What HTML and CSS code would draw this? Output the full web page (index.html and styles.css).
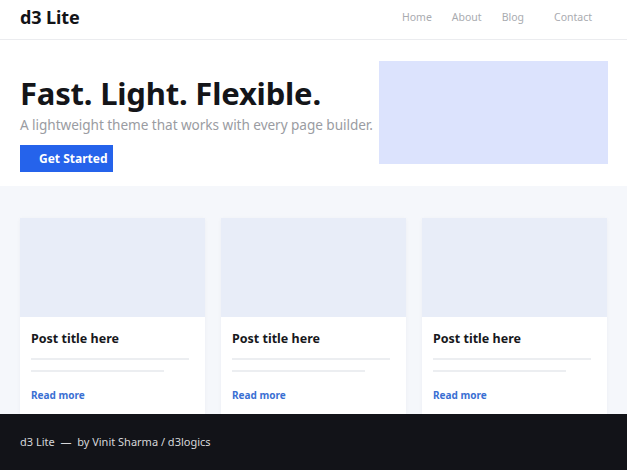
FILE: index.html
```html
<!DOCTYPE html>
<html lang="en">
<head>
<meta charset="utf-8">
<title>d3 Lite</title>
<link rel="stylesheet" href="styles.css">
</head>
<body>
<header class="site-header">
  <a class="logo" href="#">d3 Lite</a>
  <nav class="nav">
    <a href="#">Home</a>
    <a href="#">About</a>
    <a href="#">Blog</a>
    <a class="nav-contact" href="#">Contact</a>
  </nav>
</header>

<section class="hero">
  <div class="hero-text">
    <h1>Fast. Light. Flexible.</h1>
    <p class="lead">A lightweight theme that works with every page builder.</p>
    <a class="btn" href="#">Get Started</a>
  </div>
  <div class="hero-media"></div>
</section>

<section class="posts">
  <article class="card">
    <div class="card-thumb"></div>
    <div class="card-body">
      <h2>Post title here</h2>
      <div class="line"></div>
      <div class="line short"></div>
      <a class="more" href="#">Read more</a>
    </div>
  </article>
  <article class="card">
    <div class="card-thumb"></div>
    <div class="card-body">
      <h2>Post title here</h2>
      <div class="line"></div>
      <div class="line short"></div>
      <a class="more" href="#">Read more</a>
    </div>
  </article>
  <article class="card">
    <div class="card-thumb"></div>
    <div class="card-body">
      <h2>Post title here</h2>
      <div class="line"></div>
      <div class="line short"></div>
      <a class="more" href="#">Read more</a>
    </div>
  </article>
</section>

<footer class="site-footer">
  d3 Lite &nbsp;—&nbsp; by Vinit Sharma / d3logics
</footer>
</body>
</html>
```
FILE: styles.css
```css
* { box-sizing: border-box; }

html, body {
  margin: 0;
  padding: 0;
}

body {
  font-family: "Noto Sans", "Open Sans", "DejaVu Sans", sans-serif;
  color: #16171a;
  background: #fff;
  height: 470px;
  overflow: hidden;
  display: flex;
  flex-direction: column;
}

a { text-decoration: none; }

/* header */
.site-header {
  height: 40px;
  flex: none;
  display: flex;
  align-items: center;
  justify-content: space-between;
  padding: 0 20px 6px;
  border-bottom: 1px solid #ebecef;
}

.logo {
  font-size: 18px;
  font-weight: 700;
  color: #121317;
  letter-spacing: -0.1px;
}

.nav {
  display: flex;
  gap: 20px;
  padding-right: 15px;
}

.nav a {
  font-size: 10.5px;
  color: #a9abb0;
}

.nav .nav-contact { margin-left: 10px; }

/* hero */
.hero {
  flex: none;
  height: 146px;
  display: flex;
  align-items: flex-start;
  padding: 21px 19px 0 20px;
}

.hero-text {
  flex: 1 1 0;
  min-width: 0;
  position: relative;
  z-index: 0;
  padding-top: 12px;
  white-space: nowrap;
}

.hero h1 {
  margin: 0;
  font-size: 31px;
  line-height: 40px;
  font-weight: 700;
  color: #141519;
  letter-spacing: -0.2px;
}

.lead {
  margin: 0;
  font-size: 13.6px;
  line-height: 23px;
  color: #9a9ca2;
  letter-spacing: -0.05px;
}

.btn {
  display: inline-block;
  margin-top: 9px;
  width: 93px;
  height: 27px;
  padding-left: 19px;
  background: #2563eb;
  color: #fff;
  font-size: 12px;
  font-weight: 700;
  line-height: 27px;
}

.hero-media {
  position: relative;
  z-index: 1;
  flex: none;
  width: 229px;
  height: 103px;
  background: #dce3fd;
}

/* posts */
.posts {
  flex: 1;
  background: #f5f7fb;
  padding: 32px 20px 0;
  display: grid;
  grid-template-columns: repeat(3, 1fr);
  gap: 16px;
  overflow: hidden;
}

.card {
  background: #fff;
  box-shadow: 0 1px 4px rgba(30, 40, 70, 0.04);
}

.card-thumb {
  height: 99px;
  background: #e8edf8;
}

.card-body {
  padding: 13px 16px 0 11px;
}

.card h2 {
  margin: 0;
  font-size: 12.5px;
  line-height: 18px;
  font-weight: 700;
  color: #17181c;
}

.line {
  height: 2px;
  background: #eceef1;
  margin-top: 10px;
}

.line.short {
  width: 84%;
  margin-top: 10px;
}

.more {
  display: block;
  margin-top: 16px;
  font-size: 10px;
  font-weight: 700;
  color: #3a6fd3;
}

/* footer */
.site-footer {
  flex: none;
  height: 56px;
  background: #121318;
  color: #d6d7da;
  font-size: 11px;
  display: flex;
  align-items: center;
  padding: 0 20px 2px;
}
```
